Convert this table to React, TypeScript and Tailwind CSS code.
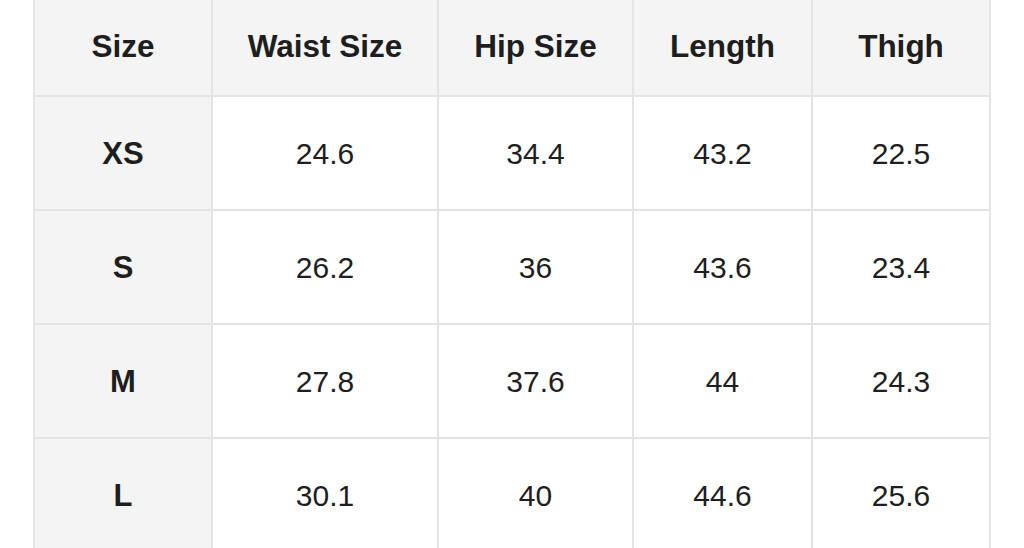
const headers = ['Size', 'Waist Size', 'Hip Size', 'Length', 'Thigh'];

const rows = [
  ['XS', '24.6', '34.4', '43.2', '22.5'],
  ['S', '26.2', '36', '43.6', '23.4'],
  ['M', '27.8', '37.6', '44', '24.3'],
  ['L', '30.1', '40', '44.6', '25.6'],
];

const cols = 'grid grid-cols-[176px_224px_193px_177px_176px] gap-[2px]';

export default function App() {
  return (
    <div className="w-[1024px] h-[548px] overflow-hidden bg-white font-['Liberation_Sans',Arial,sans-serif] text-[#1e1e1e] text-[30px]">
      <div className="ml-[33px] w-[958px] -mt-[5px] bg-[#e4e4e4] px-[2px] flex flex-col gap-[2px]">
        <div className={cols}>
          {headers.map((h) => (
            <div key={h} className="h-[100px] pt-[4px] bg-[#f4f4f4] flex items-center justify-center font-bold text-[31.5px]">
              {h}
            </div>
          ))}
        </div>
        {rows.map((r) => (
          <div key={r[0]} className={cols}>
            {r.map((c, i) => (
              <div
                key={i}
                className={`h-[112px] flex items-center justify-center ${i === 0 ? 'pt-[2px] bg-[#f4f4f4] font-bold text-[31px]' : 'bg-white'}`}
              >
                {c}
              </div>
            ))}
          </div>
        ))}
      </div>
    </div>
  );
}
